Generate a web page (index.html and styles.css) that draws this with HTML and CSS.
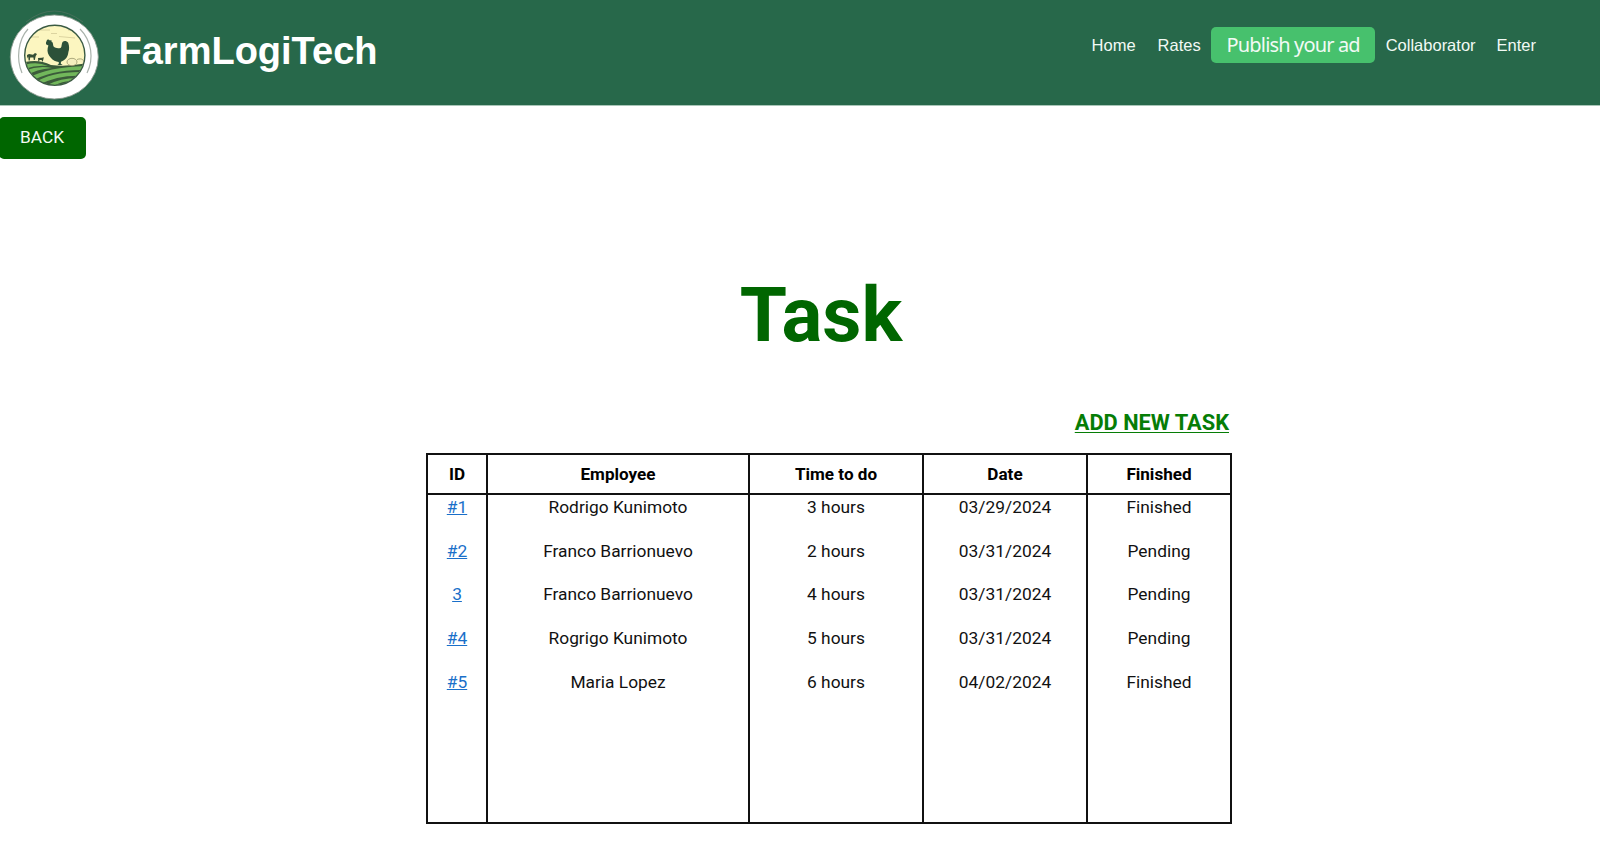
FILE: index.html
```html
<!DOCTYPE html>
<html lang="en">
<head>
<meta charset="utf-8">
<title>FarmLogiTech - Task</title>
<link rel="stylesheet" href="styles.css">
</head>
<body>
<header class="header">
  <svg class="logo" viewBox="0 0 110 105" aria-hidden="true">
    <defs><clipPath id="scene"><circle cx="54.8" cy="55.3" r="29.6"/></clipPath></defs>
    <path d="M26 22Q54 0 83 22" fill="none" stroke="#45705a" stroke-width="1"/>
    <ellipse cx="54.3" cy="57" rx="44" ry="42" fill="#fff" stroke="#8f9c92" stroke-width=".9"/>
    <path d="M28 29C18 40 16 59 22 73M80 29C92 41 94 59 87 73" fill="none" stroke="#a9b2ab" stroke-width="1.2"/>
    <g clip-path="url(#scene)">
      <path d="M20 20h70v70H20z" fill="#fcf6c0"/>
      <path d="M37 30h13M51 33.5h6M26 37h13M59 36.5l16 1.5M68 30h8" stroke="#dcd4a0" stroke-width="1" fill="none"/>
      <path d="M22 63Q37 58 51 65Q68 67 88 63V90H22z" fill="#3b5b3a"/>
      <path d="M24 65Q37 61 48 66Q35 65 24 69zM24 71Q38 65 52 68Q36 69 26 76zM28 78Q48 67 86 66V70Q52 69 30 82zM34 83Q52 71 85 72V76Q60 74 38 85zM44 87Q59 77 82 78L79 82Q62 79 53 87z" fill="#72b75b"/>
      <path d="M67 62a5 3.7 0 0 1 10 0a5 3.7 0 0 1-10 0M77 59.5c5-2 8 1 6 4" fill="#f5efbe" stroke="#9b986c" stroke-width=".8"/>
    </g>
    <path d="M27 55l2-1 4 .7 2-1.6 2 1-1.3 1.9-.9 4.1h-1l-.4-2.5h-3.2l-.4 2.8h-1.2l-.4-3.8-1 1.8zM38 58l4-.2 1.8-.6-.4 2-.6 2.2h-.8l-.3-1.4h-2.2l-.4 1.5h-.8z" fill="#354f35"/>
    <path d="M46 42.5l1.1-2.7 1.5-.4 1.4 1 1.3-.3.4 2 1 .5.7 3.7c2 2 4.6 2.2 7.1 1.6 1.6-.8.7-4.2 2.3-6.2 1.6-1.4 4.1-.7 5.4 1 1.2 3.3 1.2 6.6.2 9.4-.5 5.2-3.1 8.3-7.4 9.6l-.2 2 1.9 1.2h-5.4l1.4-.8.1-2.2c-3.2-.3-5.9-1.8-8-4.2-2.7-2.8-3.8-6.1-3.1-9.7l.7-2.6-2.4-1.1z" fill="#2c5139"/>
    <circle cx="54.8" cy="55.3" r="30.1" fill="none" stroke="#3b5b42" stroke-width="1.4"/>
  </svg>
  <span class="brand">FarmLogiTech</span>
  <nav class="nav">
    <a class="nav-link home">Home</a>
    <a class="nav-link rates">Rates</a>
    <a class="publish">Publish your ad</a>
    <a class="nav-link collaborator">Collaborator</a>
    <a class="nav-link enter">Enter</a>
  </nav>
</header>
<a class="back">BACK</a>
<main class="content">
  <h1 class="title">Task</h1>
  <a class="add">ADD NEW TASK</a>
  <table class="tasks">
    <colgroup><col class="c-id"><col class="c-employee"><col class="c-time"><col class="c-date"><col class="c-status"></colgroup>
    <thead><tr><th>ID</th><th>Employee</th><th>Time to do</th><th>Date</th><th>Finished</th></tr></thead>
    <tbody>
      <tr><td><a class="id">#1</a></td><td>Rodrigo Kunimoto</td><td>3 hours</td><td>03/29/2024</td><td>Finished</td></tr>
      <tr><td><a class="id">#2</a></td><td>Franco Barrionuevo</td><td>2 hours</td><td>03/31/2024</td><td>Pending</td></tr>
      <tr><td><a class="id">3</a></td><td>Franco Barrionuevo</td><td>4 hours</td><td>03/31/2024</td><td>Pending</td></tr>
      <tr><td><a class="id">#4</a></td><td>Rogrigo Kunimoto</td><td>5 hours</td><td>03/31/2024</td><td>Pending</td></tr>
      <tr class="last"><td><a class="id">#5</a></td><td>Maria Lopez</td><td>6 hours</td><td>04/02/2024</td><td>Finished</td></tr>
    </tbody>
  </table>
</main>
</body>
</html>
```
FILE: styles.css
```css
* { box-sizing: border-box; }
body { margin: 0; height: 843px; background: #fff; color: #111; font-family: Roboto, sans-serif; overflow: hidden; }
.header { display: flex; height: 106px; background: #27684a; border-bottom: 1px solid #a9c6b8; }
.logo { width: 110px; height: 105px; flex: none; }
.brand { margin: 29px 0 0 8.5px; font: bold 38px/44px "Liberation Sans", Arial, sans-serif; color: #fff; }
.nav { display: flex; align-items: flex-start; margin: 27px 64px 0 auto; color: #f2faf5; }
.nav-link { font: 16.5px/36px "Liberation Sans", Arial, sans-serif; }
.rates { margin-left: 22px; }
.publish { width: 164px; height: 36px; margin: 0 10.5px; border-radius: 5px; background: #47c16d; text-align: center; font: 20px/35px "Noto Sans", sans-serif; letter-spacing: -.85px; white-space: nowrap; }
.enter { margin-left: 21px; }
.back { display: block; width: 86.5px; height: 42px; margin: 11px 0 0 -1px; padding-left: 21px; border-radius: 5px; background: #060; color: #f3faf3; font-size: 17.3px; line-height: 41px; }
.content { display: flex; flex-direction: column; width: 806px; margin: 111px 0 0 426px; }
.title { margin: 0 17px 0 0; padding-left: 1px; text-align: center; font-size: 76.3px; line-height: 90px; color: #060; }
.add { align-self: flex-end; margin: 50px 3px 0 0; font-size: 21.8px; font-weight: bold; line-height: 26px; color: #067d06; text-decoration: underline; text-decoration-thickness: 1px; text-underline-offset: 2px; }
.tasks { margin-top: 17px; width: 806px; table-layout: fixed; border-spacing: 0; border-top: 2px solid #111; border-right: 2px solid #111; border-bottom: 2px solid #111; text-align: center; font-size: 17.35px; }
.c-id { width: 60px; }
.c-employee { width: 262px; }
.c-time { width: 174px; }
.c-date { width: 164px; }
.c-status { width: 144px; }
.tasks th, .tasks td { padding: 0; border-left: 2px solid #111; }
.tasks th { height: 40px; line-height: 38px; border-bottom: 2px solid #111; color: #000; font-size: 17.1px; }
.tasks td { height: 43.7px; padding-top: 1px; vertical-align: top; line-height: 22px; }
.tasks .last td { height: 152px; }
.id { color: #1a6fc9; text-decoration: underline; text-decoration-thickness: 1px; }
```
